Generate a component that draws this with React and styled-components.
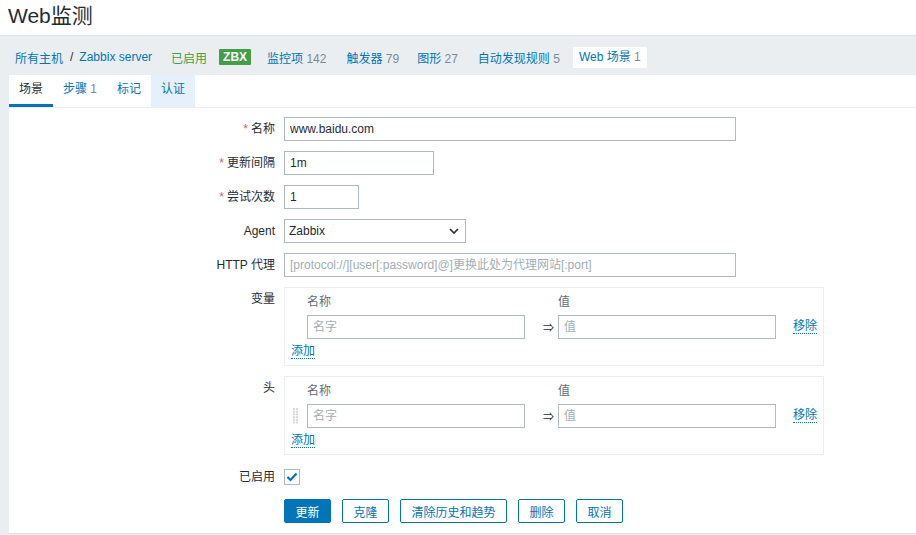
import React from "react";
import styled, { createGlobalStyle } from "styled-components";

const Global = createGlobalStyle`
  html, body { margin: 0; padding: 0; }
  body {
    background: #ebeef0;
    font-family: "Liberation Sans", Arial, "Noto Sans CJK SC", sans-serif;
    font-size: 12px;
    color: #1f2c33;
  }
  * { box-sizing: border-box; }
`;

const Page = styled.div`
  width: 916px;
  height: 535px;
  overflow: hidden;
  background: #ebeef0;
`;

const Header = styled.header`
  height: 36px;
  background: #fff;
  border-bottom: 1px solid #dfe4e7;
  padding: 4px 0 0 8px;
`;

const Title = styled.h1`
  margin: 0;
  font-size: 21px;
  font-weight: normal;
  line-height: 24px;
  color: #1f2c33;
`;

const Nav = styled.nav`
  height: 39px;
  display: flex;
  align-items: center;
  padding: 3px 0 0 15px;
  white-space: nowrap;
`;

const Crumb = styled.a`
  color: #0275b8;
  text-decoration: none;
  margin-left: ${(p) => p.$gap || 0}px;
`;

const Sep = styled.span`
  color: #1f2c33;
  margin: 0 6px 0 7px;
`;

const Status = styled.span`
  color: #429e47;
  margin-left: 19px;
`;

const Badge = styled.span`
  margin-left: 12px;
  background: #429e47;
  color: #fff;
  font-weight: bold;
  font-size: 12px;
  line-height: 16px;
  padding: 0 4px;
  border-radius: 1px;
`;

const Count = styled.span`
  color: #768d99;
`;

const CurrentCrumb = styled.span`
  margin-left: 13px;
  background: #fff;
  height: 21px;
  line-height: 21px;
  padding: 0 6px;
  color: #0275b8;
  border-radius: 1px;
`;

const Panel = styled.section`
  margin-left: 9px;
  background: #fff;
  border-bottom: 1px solid #dfe4e7;
  padding-bottom: 10px;
`;

const Tabs = styled.ul`
  display: flex;
  margin: 0;
  padding: 0;
  list-style: none;
  border-bottom: 1px solid #ebeef0;
`;

const Tab = styled.li`
  padding: 0 10px;
  height: 32px;
  line-height: 29px;
  border-bottom: 3px solid ${(p) => (p.$active ? "#0275b8" : "transparent")};
  background: ${(p) => (p.$hover ? "#e5f0fa" : "transparent")};
  color: ${(p) => (p.$active ? "#1f2c33" : "#0275b8")};
`;

const Form = styled.div`
  display: grid;
  grid-template-columns: 266px 1fr;
  column-gap: 9px;
  row-gap: 10px;
  padding-top: 9px;
`;

const Label = styled.div`
  text-align: right;
  line-height: 24px;
  white-space: nowrap;
`;

const Req = styled.span`
  color: #e45959;
  margin-right: 3px;
`;

const Field = styled.div`
  display: flex;
  align-items: center;
  min-height: 24px;
`;

const Input = styled.input`
  width: ${(p) => p.$w}px;
  height: 24px;
  border: 1px solid #acbbc2;
  padding: 0 5px;
  font-family: inherit;
  font-size: 12px;
  color: #1f2c33;
  outline: none;
  background: #fff;
  &::placeholder { color: #a2aeb4; }
`;

const Select = styled.div`
  width: ${(p) => p.$w}px;
  height: 24px;
  border: 1px solid #acbbc2;
  padding: 0 6px 0 4px;
  display: flex;
  align-items: center;
  justify-content: space-between;
`;

const Box = styled.div`
  width: 540px;
  border: 1px solid #ebeef0;
  padding: 6px 6px 7px;
`;

const Grid = styled.div`
  display: grid;
  grid-template-columns: 16px 218px 33px 218px auto;
  align-items: center;
`;

const Head = styled.div`
  grid-column: ${(p) => p.$col};
  color: #5f6e76;
  line-height: 16px;
  margin-bottom: 5px;
`;

const Cell = styled.div`
  grid-column: ${(p) => p.$col};
  display: flex;
  align-items: center;
`;

const Arrow = styled.span`
  color: #1f2c33;
  font-size: 11px;
  padding-left: 18px;
`;

const DotLink = styled.a`
  color: #0275b8;
  text-decoration: none;
  border-bottom: 1px dotted #0275b8;
  line-height: 13px;
  margin-left: ${(p) => p.$ml || 0}px;
`;

const AddRow = styled.div`
  margin-top: 5px;
  line-height: 14px;
`;

const HandleWrap = styled.span`
  padding-left: 2px;
  display: flex;
`;

const Check = styled.span`
  width: 16px;
  height: 16px;
  border: 1px solid #acbbc2;
  display: flex;
  align-items: center;
  justify-content: center;
`;

const Buttons = styled.div`
  grid-column: 2;
  display: flex;
  gap: 11px;
`;

const Button = styled.button`
  height: 24px;
  padding: 0 10.5px;
  font-family: inherit;
  font-size: 12px;
  border: 1px solid #0275b8;
  border-radius: 2px;
  background: ${(p) => (p.$primary ? "#0275b8" : "#fff")};
  color: ${(p) => (p.$primary ? "#fff" : "#0275b8")};
`;

const Chevron = () => (
  <svg width="10" height="6" viewBox="0 0 10 6">
    <path d="M1 1 L5 5 L9 1" fill="none" stroke="#1f2c33" strokeWidth="1.6" />
  </svg>
);

const Handle = () => (
  <svg width="6" height="16" viewBox="0 0 6 16">
    {[0, 1].map((c) =>
      [0, 1, 2, 3, 4, 5].map((r) => (
        <rect key={c + "-" + r} x={c * 3} y={r * 2.7} width="2" height="2" fill="#d5dbde" />
      ))
    )}
  </svg>
);

const Tick = () => (
  <svg width="12" height="10" viewBox="0 0 12 10">
    <path d="M1.5 5 L4.5 8 L10.5 1.5" fill="none" stroke="#0275b8" strokeWidth="2.2" />
  </svg>
);

const PairBox = ({ handle }) => (
  <Box>
    <Grid>
      <Head $col={2}>名称</Head>
      <Head $col={4}>值</Head>
      <Cell $col={1}>
        {handle ? (
          <HandleWrap>
            <Handle />
          </HandleWrap>
        ) : null}
      </Cell>
      <Cell $col={2}>
        <Input $w={218} placeholder="名字" />
      </Cell>
      <Cell $col={3}>
        <Arrow>⇒</Arrow>
      </Cell>
      <Cell $col={4}>
        <Input $w={218} placeholder="值" />
      </Cell>
      <Cell $col={5}>
        <DotLink $ml={17}>移除</DotLink>
      </Cell>
    </Grid>
    <AddRow>
      <DotLink>添加</DotLink>
    </AddRow>
  </Box>
);

export default function App() {
  return (
    <Page>
      <Global />
      <Header>
        <Title>Web监测</Title>
      </Header>
      <Nav>
        <Crumb>所有主机</Crumb>
        <Sep>/</Sep>
        <Crumb>Zabbix server</Crumb>
        <Status>已启用</Status>
        <Badge>ZBX</Badge>
        <Crumb $gap={16}>
          监控项 <Count>142</Count>
        </Crumb>
        <Crumb $gap={20}>
          触发器 <Count>79</Count>
        </Crumb>
        <Crumb $gap={18}>
          图形 <Count>27</Count>
        </Crumb>
        <Crumb $gap={20}>
          自动发现规则 <Count>5</Count>
        </Crumb>
        <CurrentCrumb>
          Web 场景 <Count>1</Count>
        </CurrentCrumb>
      </Nav>
      <Panel>
        <Tabs>
          <Tab $active>场景</Tab>
          <Tab>
            步骤 <Count>1</Count>
          </Tab>
          <Tab>标记</Tab>
          <Tab $hover>认证</Tab>
        </Tabs>
        <Form>
          <Label>
            <Req>*</Req>名称
          </Label>
          <Field>
            <Input $w={452} defaultValue="www.baidu.com" />
          </Field>

          <Label>
            <Req>*</Req>更新间隔
          </Label>
          <Field>
            <Input $w={150} defaultValue="1m" />
          </Field>

          <Label>
            <Req>*</Req>尝试次数
          </Label>
          <Field>
            <Input $w={75} defaultValue="1" />
          </Field>

          <Label>Agent</Label>
          <Field>
            <Select $w={182}>
              <span>Zabbix</span>
              <Chevron />
            </Select>
          </Field>

          <Label>HTTP 代理</Label>
          <Field>
            <Input $w={452} placeholder="[protocol://][user[:password]@]更换此处为代理网站[:port]" />
          </Field>

          <Label>变量</Label>
          <Field>
            <PairBox />
          </Field>

          <Label>头</Label>
          <Field>
            <PairBox handle />
          </Field>

          <Label>已启用</Label>
          <Field>
            <Check>
              <Tick />
            </Check>
          </Field>

          <Buttons>
            <Button $primary>更新</Button>
            <Button>克隆</Button>
            <Button>清除历史和趋势</Button>
            <Button>删除</Button>
            <Button>取消</Button>
          </Buttons>
        </Form>
      </Panel>
    </Page>
  );
}
